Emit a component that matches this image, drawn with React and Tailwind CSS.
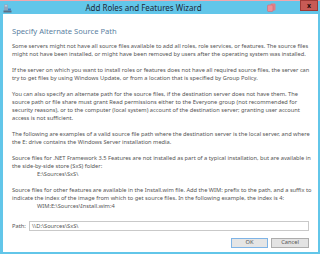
import React from "react";

const font = { fontFamily: '"Noto Sans", "Liberation Sans", sans-serif' };

function WizardIcon() {
  return (
    <svg width="9" height="9" viewBox="0 0 9 9">
      <rect x="1" y="0.5" width="4" height="6" fill="#8fa6bf" />
      <rect x="1.8" y="1.5" width="2.4" height="0.8" fill="#e8eef4" />
      <rect x="0.5" y="6.5" width="8" height="2" fill="#5a6f86" />
      <rect x="5" y="4.5" width="3" height="2" fill="#3e7fc4" />
    </svg>
  );
}

function HelpIcon() {
  return (
    <svg width="9" height="9" viewBox="0 0 9 9">
      <rect x="3.5" y="0.5" width="5" height="7" rx="1" fill="#e07e86" />
      <rect x="0.5" y="2" width="5.5" height="6.5" rx="1" fill="#ef8f97" stroke="#d26a73" strokeWidth="0.6" />
    </svg>
  );
}

function Para({ lines }) {
  return (
    <div className="mb-[8px]">
      {lines.map((l, i) => (
        <div key={i} className={typeof l === "object" ? "pl-[25px]" : ""}>
          {typeof l === "object" ? l.text : l}
        </div>
      ))}
    </div>
  );
}

export default function App() {
  return (
    <div
      className="w-[320px] h-[254px] bg-[#62c6e9] flex flex-col overflow-hidden"
      style={font}
    >
      <div className="h-px bg-[#f2a7ad]" />
      <div className="h-[13px] flex items-center">
        <div className="pl-[3px] pt-[1px]">
          <WizardIcon />
        </div>
        <div className="flex-1 text-center text-[8px] text-[#1d2b3a] leading-none pl-[8px]">
          Add Roles and Features Wizard
        </div>
        <div className="flex items-start h-full">
          <div className="mr-[24px] pt-[2px]">
            <HelpIcon />
          </div>
          <div className="w-[18px] h-[11px] -mt-px bg-[#c75a55] border border-[#9e3a36] flex items-center justify-center text-[7px] font-bold text-[#2a0d0c] leading-none">
            x
          </div>
          <div className="w-[2px]" />
        </div>
      </div>
      <div className="flex-1 bg-white ml-[3px] mr-[2px] mb-[2px] pl-[9px] pr-[8px] pt-[12px] text-[#555555] flex flex-col">
        <div className="text-[7.6px] leading-[10px] text-[#5b7fa2] mb-[6px]">
          Specify Alternate Source Path
        </div>
        <div className="text-[5.7px] leading-[8px] whitespace-nowrap">
          <Para
            lines={[
              "Some servers might not have all source files available to add all roles, role services, or features. The source files",
              "might not have been installed, or might have been removed by users after the operating system was installed.",
            ]}
          />
          <Para
            lines={[
              "If the server on which you want to install roles or features does not have all required source files, the server can",
              "try to get files by using Windows Update, or from a location that is specified by Group Policy.",
            ]}
          />
          <Para
            lines={[
              "You can also specify an alternate path for the source files, if the destination server does not have them. The",
              "source path or file share must grant Read permissions either to the Everyone group (not recommended for",
              "security reasons), or to the computer (local system) account of the destination server; granting user account",
              "access is not sufficient.",
            ]}
          />
          <Para
            lines={[
              "The following are examples of a valid source file path where the destination server is the local server, and where",
              "the E: drive contains the Windows Server installation media.",
            ]}
          />
          <Para
            lines={[
              "Source files for .NET Framework 3.5 Features are not installed as part of a typical installation, but are available in",
              "the side-by-side store (SxS) folder:",
              { text: "E:\\Sources\\SxS\\" },
            ]}
          />
          <Para
            lines={[
              "Source files for other features are available in the Install.wim file. Add the WIM: prefix to the path, and a suffix to",
              "indicate the index of the image from which to get source files. In the following example, the index is 4:",
              { text: "WIM:E:\\Sources\\Install.wim:4" },
            ]}
          />
        </div>
        <div className="flex items-center mt-[3px] text-[5.7px]">
          <span className="w-[17px]">Path:</span>
          <div className="flex-1 h-[10px] border border-[#c9c9c9] flex items-center pl-[2px] mr-[1px]">
            \\D:\Sources\SxS\
          </div>
        </div>
        <div className="flex justify-end gap-[3px] mt-[7px] mr-[1px] text-[5.7px]">
          <button className="w-[37px] h-[10px] bg-[#e5e5e5] border border-[#7fb4e6] flex items-center justify-center leading-none">
            OK
          </button>
          <button className="w-[38px] h-[10px] bg-[#e3e3e3] border border-[#adadad] flex items-center justify-center leading-none">
            Cancel
          </button>
        </div>
      </div>
    </div>
  );
}
